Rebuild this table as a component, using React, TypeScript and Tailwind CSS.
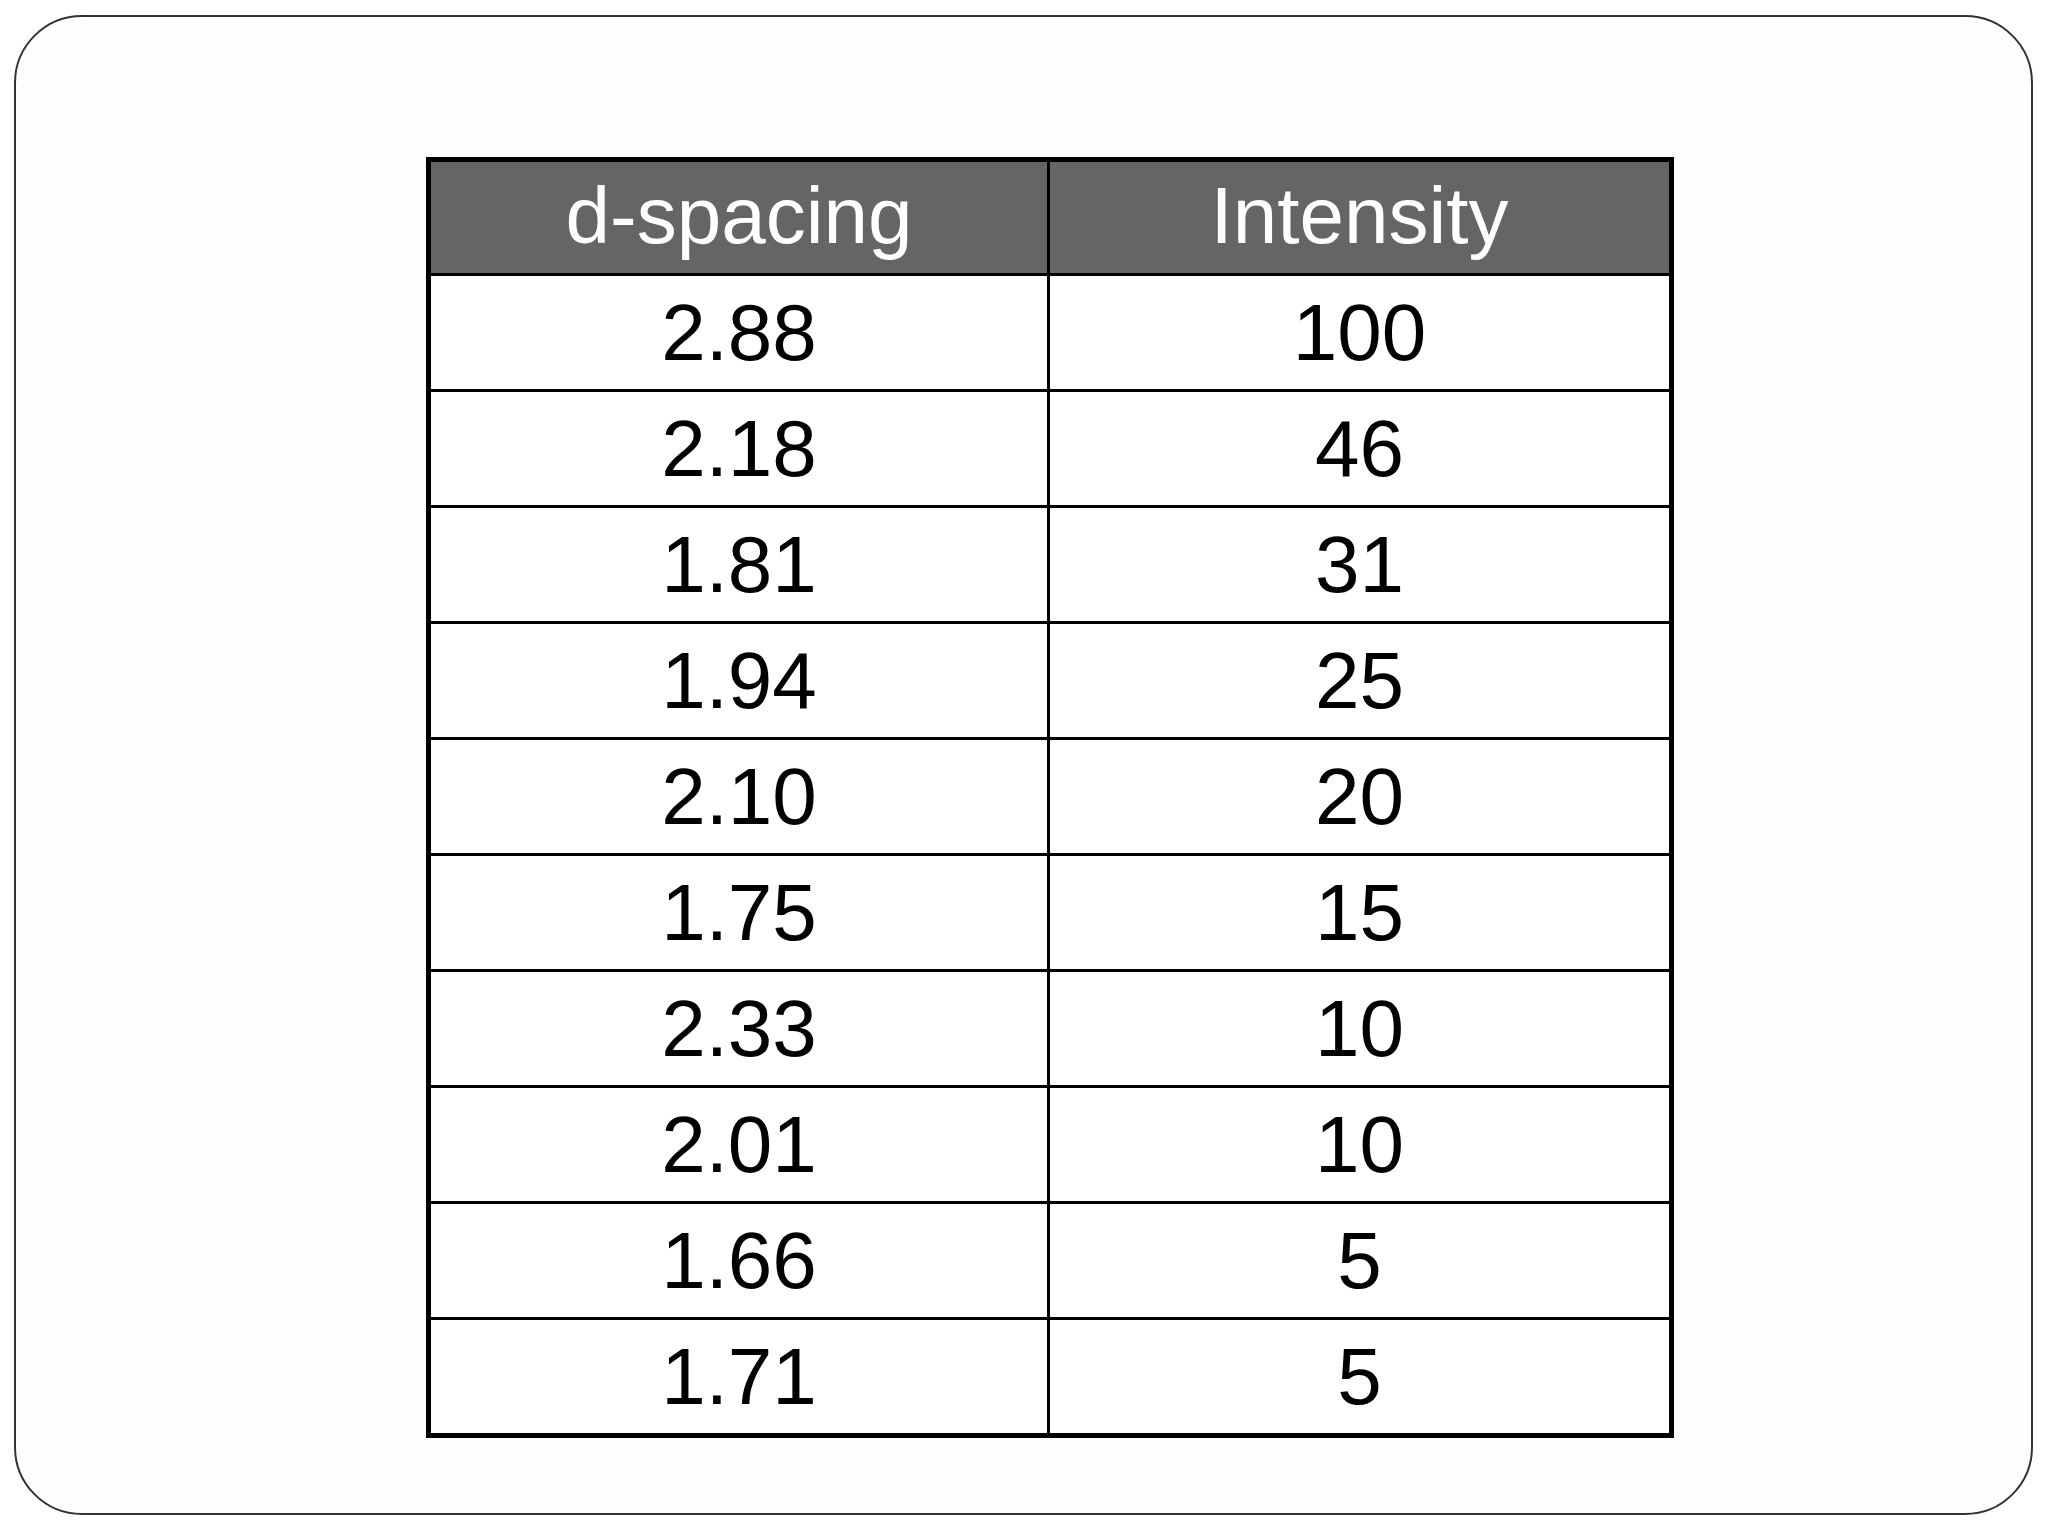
const rows: [string, string][] = [
  ["2.88", "100"],
  ["2.18", "46"],
  ["1.81", "31"],
  ["1.94", "25"],
  ["2.10", "20"],
  ["1.75", "15"],
  ["2.33", "10"],
  ["2.01", "10"],
  ["1.66", "5"],
  ["1.71", "5"],
]

export default function App() {
  return (
    <div className="min-h-screen bg-white pt-[15px] pl-[14px] font-['Liberation_Sans',Arial,sans-serif]">
      <div className="w-[2019px] h-[1500px] rounded-[68px] border-2 border-[#333] bg-[#fefefe] pt-[140px] pl-[410px]">
        <div className="w-[1248px] border-[5px] border-black">
          <div className="grid h-[111px] grid-cols-2 bg-[#676465] text-[80px] leading-none text-white">
            <div className="flex items-center justify-center border-r-[3px] border-black pb-[4px]">
              d-spacing
            </div>
            <div className="flex items-center justify-center pb-[4px]">Intensity</div>
          </div>
          {rows.map(([d, intensity], i) => (
            <div
              key={i}
              className="grid h-[116px] grid-cols-2 border-t-[3px] border-black bg-white text-[80px] leading-none text-black"
            >
              <div className="flex items-center justify-center border-r-[3px] border-black">
                {d}
              </div>
              <div className="flex items-center justify-center">{intensity}</div>
            </div>
          ))}
        </div>
      </div>
    </div>
  )
}
